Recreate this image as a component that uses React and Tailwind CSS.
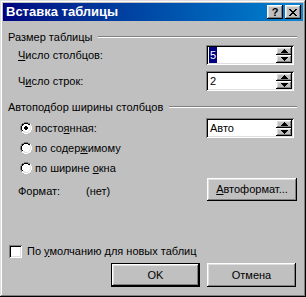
const raised = 'shadow-[inset_-1px_-1px_#000,inset_1px_1px_#fff,inset_-2px_-2px_#808080,inset_2px_2px_#dfdfdf]'
const sunken = 'shadow-[inset_1px_1px_#808080,inset_-1px_-1px_#fff,inset_2px_2px_#000,inset_-2px_-2px_#dfdfdf]'

function Arrow({ up }) {
  return (
    <svg width="7" height="4" viewBox="0 0 7 4" className="block">
      {up ? <path d="M3 0h1v1h1v1h1v1h1v1H0V3h1V2h1V1h1z" fill="#000" /> : <path d="M0 0h7v1H6v1H5v1H4v1H3V3H2V2H1V1H0z" fill="#000" />}
    </svg>
  )
}

function SpinBox({ value, selected }) {
  return (
    <div className={`flex h-[20px] w-[88px] mr-[3px] bg-white p-[2px] ${sunken}`}>
      <div className="flex flex-1 items-center pl-[1px]">
        <span className={selected ? 'bg-[#000080] px-[1px] text-white' : 'px-[1px] text-black'}>{value}</span>
      </div>
      <div className="flex w-[16px] flex-col">
        <div className={`flex h-[8px] items-center justify-center bg-[#c0c0c0] ${raised}`}>
          <Arrow up />
        </div>
        <div className={`flex h-[8px] items-center justify-center bg-[#c0c0c0] ${raised}`}>
          <Arrow />
        </div>
      </div>
    </div>
  )
}

function GroupHeader({ children }) {
  return (
    <div className="flex h-[14px] items-center">
      <span className="pr-[6px]">{children}</span>
      <div className="h-[2px] flex-1 border-t border-b border-t-[#808080] border-b-white" />
    </div>
  )
}

function Radio({ checked }) {
  return (
    <svg width="12" height="12" viewBox="0 0 12 12" className="block">
      <path d="M4 0h4v1h2v1h1v2h1v4h-1v2h-1v1H8v1H4v-1H2v-1H1V8H0V4h1V2h1V1h2z" fill="#fff" />
      <path d="M4 0h4v1H4zM2 1h2v1H2zM8 1h2v1H8zM1 2h1v2H1zM0 4h1v4H0zM1 8h1v2H1z" fill="#808080" />
      <path d="M4 1h4v1H4zM2 2h2v1H2zM8 2h2v1H8zM2 3h1v1H2zM1 4h1v4H1zM2 8h1v1H2z" fill="#000" />
      <path d="M10 2h1v2h-1zM11 4h1v4h-1zM10 8h1v2h-1zM8 10h2v1H8zM2 10h2v1H2zM4 11h4v1H4z" fill="#fff" />
      <path d="M9 3h1v1H9zM10 4h1v4h-1zM9 8h1v1H9zM8 9h1v1H8zM3 9h2v1H3zM4 10h4v1H4z" fill="#dfdfdf" />
      {checked && <path d="M5 4h2v1h1v2H7v1H5V7H4V5h1z" fill="#000" />}
    </svg>
  )
}

function RadioRow({ checked, children, right }) {
  return (
    <div className="flex h-[20px] items-center">
      <div className="ml-[12px] mr-[3px]">
        <Radio checked={checked} />
      </div>
      <span className="flex-1">{children}</span>
      {right}
    </div>
  )
}

function Button({ children, isDefault, className = '' }) {
  return (
    <div className={`flex items-center justify-center bg-[#c0c0c0] ${isDefault ? 'border border-black' : ''} ${className}`}>
      <div className={`flex h-full w-full items-center justify-center ${raised}`}>{children}</div>
    </div>
  )
}

export default function App() {
  return (
    <div
      className="flex h-[297px] w-[306px] flex-col bg-[#c0c0c0] p-[3px] text-[11px] text-black shadow-[inset_-1px_-1px_#000,inset_1px_1px_#dfdfdf,inset_-2px_-2px_#808080,inset_2px_2px_#fff]"
      style={{ fontFamily: '"Liberation Sans", Arial, sans-serif' }}
    >
      {/* title bar */}
      <div className="flex h-[18px] items-center bg-gradient-to-r from-[#000080] to-[#1084d0] pl-[3px] pr-[2px]">
        <span className="flex-1 text-[13px] font-bold text-white">Вставка таблицы</span>
        <div className={`mr-[2px] flex h-[14px] w-[16px] items-center justify-center bg-[#c0c0c0] text-[11px] font-bold leading-none ${raised}`}>?</div>
        <div className={`flex h-[14px] w-[16px] items-center justify-center bg-[#c0c0c0] ${raised}`}>
          <svg width="8" height="7" viewBox="0 0 8 7">
            <path d="M0 0h2v1h1v1h2V1h1V0h2v1H7v1H6v1H5v1h1v1h1v1h1v1H6V6H5V5H3v1H2v1H0V6h1V5h1V4h1V3H2V2H1V1H0z" fill="#000" />
          </svg>
        </div>
      </div>

      <div className="flex flex-1 flex-col pl-[5px] pr-[6px] pt-[9px]">
        <GroupHeader>Размер таблицы</GroupHeader>
        <div className="mt-[1px] flex h-[20px] items-center">
          <span className="ml-[10px] flex-1">
            <u>Ч</u>исло столбцов:
          </span>
          <SpinBox value="5" selected />
        </div>
        <div className="mt-[6px] flex h-[20px] items-center">
          <span className="ml-[10px] flex-1">
            Ч<u>и</u>сло строк:
          </span>
          <SpinBox value="2" />
        </div>

        <div className="mt-[9px]">
          <GroupHeader>Автоподбор ширины столбцов</GroupHeader>
        </div>
        <div className="mt-[4px]">
          <RadioRow checked right={<SpinBox value="Авто" />}>
            посто<u>я</u>нная:
          </RadioRow>
        </div>
        <RadioRow>
          по содер<u>ж</u>имому
        </RadioRow>
        <RadioRow>
          по ширине <u>о</u>кна
        </RadioRow>
        <div className="flex h-[23px] items-center">
          <span className="ml-[10px] w-[68px] pt-[3px]">Формат:</span>
          <span className="flex-1 pt-[3px]">(нет)</span>
          <Button className="h-[23px] w-[90px]">
            <span>
              <u>А</u>втоформат...
            </span>
          </Button>
        </div>

        <div className="mt-[43px] flex h-[14px] items-center">
          <div className={`mr-[5px] ml-[1px] h-[13px] w-[13px] bg-white ${sunken}`} />
          <span>
            По <u>у</u>молчанию для новых таблиц
          </span>
        </div>

        <div className="mt-[5px] flex justify-end gap-[7px]">
          <Button isDefault className="h-[24px] w-[89px]">OK</Button>
          <Button className="mr-[1px] h-[24px] w-[89px]">Отмена</Button>
        </div>
      </div>
    </div>
  )
}
